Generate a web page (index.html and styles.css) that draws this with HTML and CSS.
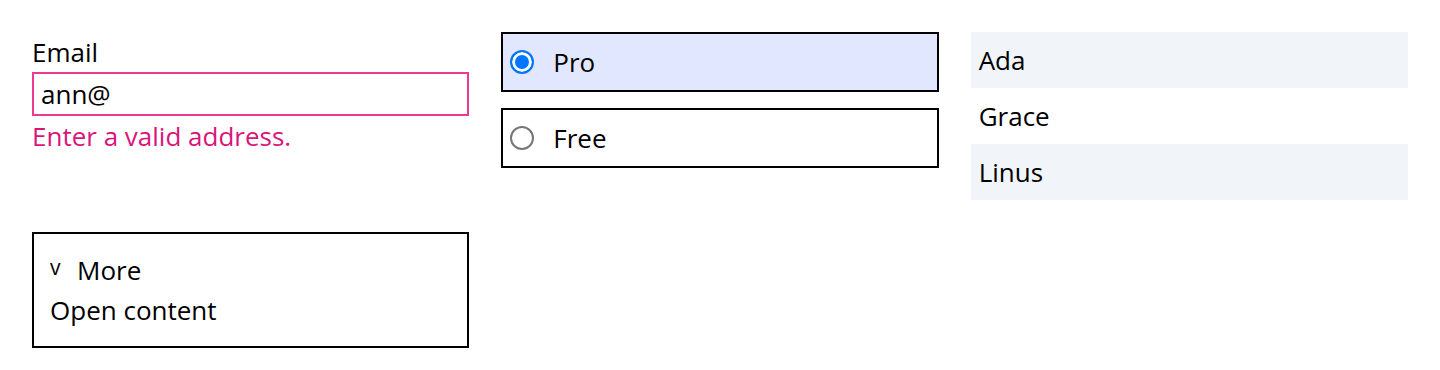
FILE: index.html
```html
<!DOCTYPE html>
<html lang="en">

<head>
    <meta charset="UTF-8">
    <meta name="viewport" content="width=device-width, initial-scale=1.0">
    <title>Form parts</title>
    <link rel="stylesheet" href="styles.css">
</head>

<body>
    <main class="board">
        <div class="field">
            <label class="field-label" for="email">Email</label>
            <input class="field-input" id="email" type="email" value="ann@">
            <p class="field-error">Enter a valid address.</p>
        </div>

        <div class="plans">
            <label class="plan selected">
                <input type="radio" name="plan" checked>
                <span>Pro</span>
            </label>
            <label class="plan">
                <input type="radio" name="plan">
                <span>Free</span>
            </label>
        </div>

        <ul class="people">
            <li>Ada</li>
            <li>Grace</li>
            <li>Linus</li>
        </ul>

        <details class="more" open>
            <summary><span class="chev">v</span>More</summary>
            <p>Open content</p>
        </details>
    </main>
</body>

</html>
```

FILE: styles.css
```css
* {
    margin: 0;
    padding: 0;
    box-sizing: border-box;
}

body {
    font-family: "Open Sans", "Noto Sans", sans-serif;
    font-size: 26px;
    color: #000;
    background: #fff;
}

.board {
    display: grid;
    grid-template-columns: repeat(3, 1fr);
    gap: 32px;
    padding: 32px;
    align-items: start;
}

/* email field */
.field {
    display: flex;
    flex-direction: column;
}

.field-label {
    line-height: 40px;
}

.field-input {
    height: 44px;
    border: 2px solid #ee3892;
    padding: 0 7px;
    font: inherit;
    color: #000;
    outline: none;
}

.field-error {
    line-height: 40px;
    color: #d9157a;
}

/* plan picker */
.plans {
    display: flex;
    flex-direction: column;
    gap: 16px;
}

.plan {
    display: flex;
    align-items: center;
    gap: 19px;
    height: 60px;
    padding: 0 7px;
    border: 2px solid #000;
    line-height: 40px;
    cursor: pointer;
}

.plan.selected {
    background-color: #e0e7ff;
}

.plan input {
    appearance: none;
    -webkit-appearance: none;
    flex-shrink: 0;
    width: 24px;
    height: 24px;
    margin: 0;
    border: 2px solid #767676;
    border-radius: 50%;
    background: #fff;
}

.plan input:checked {
    border-color: #0075ff;
    background: #0075ff;
    box-shadow: inset 0 0 0 3px #fff;
}

/* list */
.people {
    list-style: none;
}

.people li {
    padding: 8px;
    line-height: 40px;
}

.people li:nth-child(odd) {
    background-color: #f1f5f9;
}

/* disclosure */
.more {
    border: 2px solid #000;
    padding: 16px;
    line-height: 40px;
}

.more summary {
    display: block;
    list-style: none;
    cursor: pointer;
}

.more summary::-webkit-details-marker {
    display: none;
}

.chev {
    display: inline-block;
    width: 27px;
    font-size: 21px;
    line-height: 35px;
    vertical-align: top;
}
```
